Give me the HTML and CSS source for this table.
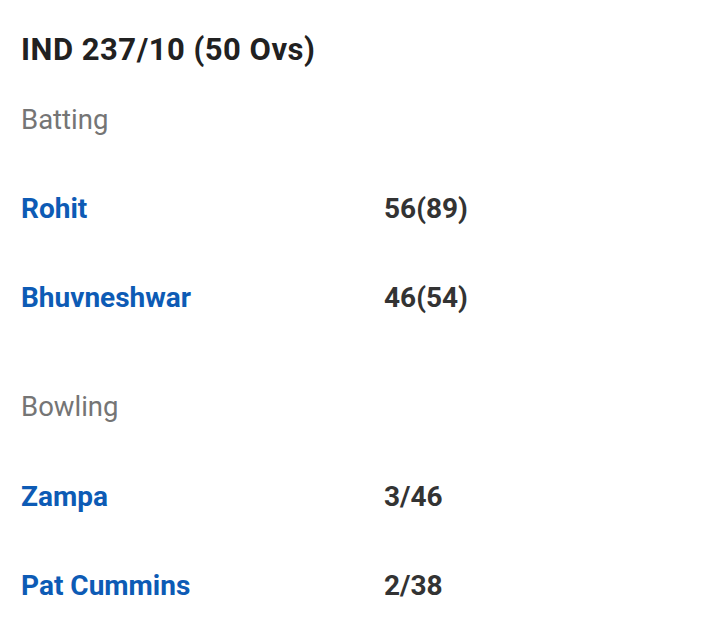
FILE: index.html
```html
<!DOCTYPE html>
<html>
<head>
<meta charset="utf-8">
<link rel="stylesheet" href="styles.css">
</head>
<body>
<div class="card">
  <h1 class="title">IND 237/10 (50 Ovs)</h1>
  <section class="group">
    <div class="label">Batting</div>
    <div class="rows">
      <div class="row"><span class="name">Rohit</span><span class="score">56(89)</span></div>
      <div class="row"><span class="name">Bhuvneshwar</span><span class="score">46(54)</span></div>
    </div>
  </section>
  <section class="group group-second">
    <div class="label">Bowling</div>
    <div class="rows">
      <div class="row"><span class="name">Zampa</span><span class="score">3/46</span></div>
      <div class="row"><span class="name">Pat Cummins</span><span class="score">2/38</span></div>
    </div>
  </section>
</div>
</body>
</html>
```
FILE: styles.css
```css
html, body {
  margin: 0;
  padding: 0;
  background: #ffffff;
}
body {
  font-family: Roboto, "Noto Sans", sans-serif;
  width: 720px;
  height: 636px;
  overflow: hidden;
}
.card {
  padding: 30px 0 0 21px;
  display: flex;
  flex-direction: column;
}
.title {
  margin: 0;
  font-size: 31px;
  line-height: 40px;
  letter-spacing: 0.5px;
  font-weight: 700;
  color: #212121;
}
.group {
  display: flex;
  flex-direction: column;
  padding-top: 30px;
}
.group-second {
  padding-top: 45px;
}
.label {
  font-size: 27.5px;
  line-height: 40px;
  color: #757575;
  font-weight: 400;
}
.rows {
  display: flex;
  flex-direction: column;
  padding-top: 24px;
}
.group-second .rows {
  padding-top: 25px;
}
.row {
  display: grid;
  grid-template-columns: 363px auto;
  height: 89px;
  line-height: 89px;
  font-size: 28px;
  font-weight: 700;
}
.name {
  color: #0d5bb5;
}
.score {
  color: #333333;
}
```
